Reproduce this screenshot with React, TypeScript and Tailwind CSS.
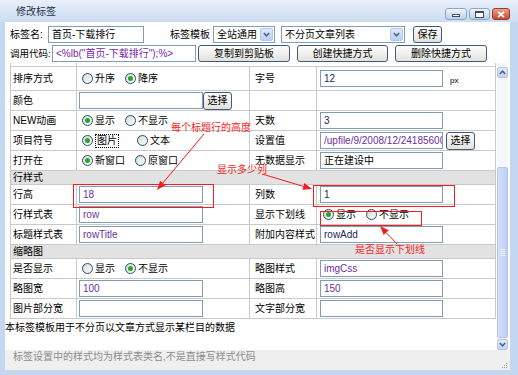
import React from "react";

const line = "border-[#c9c9c9]";
const purple = "text-[#6b2fa0]";
const navy = "text-[#23235e]";

function Field({
  value = "",
  w = "w-[124px]",
  color = "text-black",
}: {
  value?: string;
  w?: string;
  color?: string;
}) {
  return (
    <div
      className={`flex h-[17px] shrink-0 items-center overflow-hidden whitespace-nowrap border border-[#7f9db9] bg-white pl-[3px] ${w} ${color}`}
    >
      {value}
    </div>
  );
}

function Btn({
  children,
  w,
  h = "h-[17px]",
}: {
  children: React.ReactNode;
  w: string;
  h?: string;
}) {
  return (
    <div
      className={`flex shrink-0 items-center justify-center whitespace-nowrap rounded-[3px] border border-[#3d5a7c] bg-linear-to-b from-white to-[#e2e1db] text-black ${w} ${h}`}
    >
      {children}
    </div>
  );
}

function Select({ value, w }: { value: string; w: string }) {
  return (
    <div
      className={`flex h-[17px] shrink-0 items-center justify-between whitespace-nowrap border border-[#7f9db9] bg-white pl-[3px] pr-[1px] ${w}`}
    >
      <span>{value}</span>
      <span className="flex h-[13px] w-[13px] items-center justify-center rounded-[2px] border border-[#b3c6ee] bg-linear-to-b from-[#dfe8fc] to-[#bccff7]">
        <svg width="7" height="5" viewBox="0 0 7 5">
          <path d="M0.8 1 L3.5 3.8 L6.2 1" stroke="#4d6185" strokeWidth="1.5" fill="none" />
        </svg>
      </span>
    </div>
  );
}

function Radio({
  checked = false,
  label,
  focus = false,
}: {
  checked?: boolean;
  label: string;
  focus?: boolean;
}) {
  return (
    <span className="flex items-center gap-[2px] whitespace-nowrap">
      <span className="flex h-[11px] w-[11px] shrink-0 items-center justify-center rounded-full border border-[#1c5180] bg-linear-to-br from-[#d8d8d0] to-white">
        {checked && <span className="h-[5px] w-[5px] rounded-full bg-[#2aa32a]" />}
      </span>
      <span className={focus ? "border border-dotted border-black px-[1px]" : ""}>{label}</span>
    </span>
  );
}

function Radios({ children, gap = "gap-[10px]" }: { children: React.ReactNode; gap?: string }) {
  return <div className={`flex items-center pl-[3px] ${gap}`}>{children}</div>;
}

function Row({
  label,
  left,
  label2,
  right,
  h = "h-[20px]",
}: {
  label: string;
  left?: React.ReactNode;
  label2?: string;
  right?: React.ReactNode;
  h?: string;
}) {
  return (
    <div className={`grid grid-cols-[66px_173px_67px_178px] border-b ${line} ${h}`}>
      <div className={`flex items-center whitespace-nowrap border-r pl-[2px] ${line}`}>{label}</div>
      <div className={`flex items-center border-r pl-[2px] ${line}`}>{left}</div>
      <div className={`flex items-center whitespace-nowrap border-r pl-[5px] ${line}`}>{label2}</div>
      <div className="flex items-center pl-[3px]">{right}</div>
    </div>
  );
}

function Section({ title }: { title: string }) {
  return (
    <div className={`flex h-[14px] items-center border-b bg-[#e2e2e2] pl-[2px] ${line}`}>
      {title}
    </div>
  );
}

function WinControls() {
  return (
    <div className="flex items-start gap-[2px] pr-[8px] pt-[8px]">
      <div className="flex h-[12px] w-[22px] items-end justify-center rounded-[3px] border border-[#8ca5c9] bg-linear-to-b from-[#f2f6fc] to-[#bccee9] pb-[2px]">
        <div className="h-[3px] w-[8px] border border-[#3d4c66] bg-white" />
      </div>
      <div className="flex h-[12px] w-[21px] items-center justify-center rounded-[3px] border border-[#8ca5c9] bg-linear-to-b from-[#f2f6fc] to-[#bccee9]">
        <div className="h-[7px] w-[9px] border border-t-2 border-[#3d4c66] bg-white" />
      </div>
      <div className="flex h-[12px] w-[18px] items-center justify-center rounded-[3px] border border-[#9a3b2b] bg-linear-to-b from-[#eba08e] to-[#c4452f]">
        <svg width="8" height="7" viewBox="0 0 8 7">
          <path d="M1 0.8 L7 6.2 M7 0.8 L1 6.2" stroke="white" strokeWidth="1.8" />
        </svg>
      </div>
    </div>
  );
}

function Scrollbar() {
  const btn =
    "flex h-[11px] items-center justify-center rounded-[2px] border border-[#b3c6ee] bg-linear-to-b from-[#e1eafc] to-[#c2d3f7]";
  return (
    <div className="flex w-[11px] flex-col bg-[#f6f7fb]">
      <div className={`mt-[4px] ${btn}`}>
        <svg width="7" height="5" viewBox="0 0 7 5">
          <path d="M0.8 4 L3.5 1.2 L6.2 4" stroke="#4d6185" strokeWidth="1.5" fill="none" />
        </svg>
      </div>
      <div className="h-[89px]" />
      <div className="flex h-[171px] items-center justify-center rounded-[2px] border border-[#b3c6ee] bg-linear-to-r from-[#d2def9] to-[#bccff5]">
        <div className="flex flex-col gap-[1px]">
          <div className="h-px w-[5px] bg-[#eef3fd]" />
          <div className="h-px w-[5px] bg-[#eef3fd]" />
          <div className="h-px w-[5px] bg-[#eef3fd]" />
          <div className="h-px w-[5px] bg-[#eef3fd]" />
        </div>
      </div>
      <div className="h-px" />
      <div className={btn}>
        <svg width="7" height="5" viewBox="0 0 7 5">
          <path d="M0.8 1 L3.5 3.8 L6.2 1" stroke="#4d6185" strokeWidth="1.5" fill="none" />
        </svg>
      </div>
    </div>
  );
}

function Arrow({ x1, y1, x2, y2 }: { x1: number; y1: number; x2: number; y2: number }) {
  const a = Math.atan2(y2 - y1, x2 - x1);
  const l = 9;
  const w = 3.5;
  const bx = x2 - l * Math.cos(a);
  const by = y2 - l * Math.sin(a);
  const points = `${x2},${y2} ${bx + w * Math.sin(a)},${by - w * Math.cos(a)} ${
    bx - w * Math.sin(a)
  },${by + w * Math.cos(a)}`;
  return (
    <g>
      <line x1={x1} y1={y1} x2={bx} y2={by} stroke="#f21d1d" strokeWidth="1" />
      <polygon points={points} fill="#f21d1d" />
    </g>
  );
}

function Annotations() {
  return (
    <>
      <svg
        className="pointer-events-none absolute left-0 top-0"
        width="518"
        height="375"
        viewBox="0 0 518 375"
      >
        <rect x="73.5" y="184.5" width="140" height="23" fill="none" stroke="#f21d1d" />
        <rect x="313.5" y="185.5" width="141" height="21" fill="none" stroke="#f21d1d" />
        <rect x="320.5" y="211.5" width="101" height="14" fill="none" stroke="#f21d1d" />
        <Arrow x1={204} y1={134} x2={157} y2={190} />
        <Arrow x1={262} y1={174} x2={312} y2={189} />
        <Arrow x1={397} y1={244} x2={380} y2={226} />
      </svg>
      <span className="pointer-events-none absolute left-[171px] top-[122px] whitespace-nowrap text-[#f21d1d]">
        每个标题行的高度
      </span>
      <span className="pointer-events-none absolute left-[217px] top-[164px] whitespace-nowrap text-[#f21d1d]">
        显示多少列
      </span>
      <span className="pointer-events-none absolute left-[355px] top-[244px] whitespace-nowrap text-[#f21d1d]">
        是否显示下划线
      </span>
    </>
  );
}

export default function App() {
  return (
    <div className="relative flex h-[375px] w-[518px] flex-col overflow-hidden bg-[#c4d7f0] font-['Liberation_Sans','Noto_Sans_CJK_SC',sans-serif] text-[10px] leading-[12px] text-black">
      <div className="flex h-[22px] shrink-0 items-start justify-between bg-linear-to-b from-[#e8f0fa] to-[#cddcf1]">
        <span className="pl-[16px] pt-[6px] text-[#1d2f4d]">修改标签</span>
        <WinControls />
      </div>

      <div className="flex min-h-0 flex-1 pl-[5px] pr-[8px]">
        <div className="flex w-full flex-col bg-white">
          <div className="flex flex-col gap-[2px] pb-[1px] pl-[5px] pt-[4px]">
            <div className="flex h-[17px] items-center whitespace-nowrap">
              <span className="w-[38px] shrink-0">标签名:</span>
              <Field value="首页-下载排行" w="w-[96px]" />
              <span className="ml-[26px] w-[43px] shrink-0">标签模板</span>
              <Select value="全站通用" w="w-[62px]" />
              <div className="ml-[6px]">
                <Select value="不分页文章列表" w="w-[124px]" />
              </div>
              <div className="ml-[8px]">
                <Btn w="w-[29px]">保存</Btn>
              </div>
            </div>
            <div className="flex h-[17px] items-center whitespace-nowrap">
              <span className="w-[42px] shrink-0 text-[9.5px]">调用代码:</span>
              <Field value={'<%lb("首页-下载排行");%>'} w="w-[144px]" color="text-[#7a1fa2]" />
              <div className="ml-[2px]">
                <Btn w="w-[92px]">复制到剪贴板</Btn>
              </div>
              <div className="ml-[7px]">
                <Btn w="w-[91px]">创建快捷方式</Btn>
              </div>
              <div className="ml-[7px]">
                <Btn w="w-[92px]">删除快捷方式</Btn>
              </div>
            </div>
          </div>

          <div className="flex h-[287px] shrink-0 pr-[2px]">
            <div className="w-[492px] overflow-hidden">
              <div className={`ml-[5px] w-[486px] border-x ${line}`}>
                <div className={`-mt-[16px] grid h-[20px] grid-cols-[66px_418px] border-b ${line}`}>
                  <div className={`flex items-center whitespace-nowrap border-r pl-[2px] ${line}`}>排序字段</div>
                  <div className="flex items-center gap-[14px] pl-[5px]">
                    <Radio label="最新值" />
                    <Radio label="点击数" />
                    <Radio label="回复数" />
                    <Radio label="标题" />
                    <Radio label="发布顺序" />
                    <Radio label="编辑日期" />
                    <Radio label="发布人" />
                  </div>
                </div>
                <Row
                  h="h-[24px]"
                  label="排序方式"
                  left={
                    <Radios>
                      <Radio label="升序" />
                      <Radio label="降序" checked />
                    </Radios>
                  }
                  label2="字号"
                  right={
                    <>
                      <Field value="12" w="w-[123px]" color={navy} />
                      <span className="ml-[7px] mt-[5px] text-[8px]">px</span>
                    </>
                  }
                />
                <Row
                  label="颜色"
                  left={
                    <>
                      <Field />
                      <Btn w="w-[29px]" h="h-[18px]">
                        选择
                      </Btn>
                    </>
                  }
                />
                <Row
                  label="NEW动画"
                  left={
                    <Radios>
                      <Radio label="显示" checked />
                      <Radio label="不显示" />
                    </Radios>
                  }
                  label2="天数"
                  right={<Field value="3" w="w-[123px]" color={navy} />}
                />
                <Row
                  label="项目符号"
                  left={
                    <Radios gap="gap-[18px]">
                      <Radio label="图片" checked focus />
                      <Radio label="文本" />
                    </Radios>
                  }
                  label2="设置值"
                  right={
                    <>
                      <Field value="/upfile/9/2008/12/241856000" w="w-[123px]" color={purple} />
                      <div className="ml-[3px]">
                        <Btn w="w-[29px]" h="h-[18px]">
                          选择
                        </Btn>
                      </div>
                    </>
                  }
                />
                <Row
                  label="打开在"
                  left={
                    <Radios>
                      <Radio label="新窗口" checked />
                      <Radio label="原窗口" />
                    </Radios>
                  }
                  label2="无数据显示"
                  right={<Field value="正在建设中" w="w-[123px]" />}
                />
                <Section title="行样式" />
                <Row
                  label="行高"
                  left={<Field value="18" color={purple} />}
                  label2="列数"
                  right={<Field value="1" w="w-[123px]" color={navy} />}
                />
                <Row
                  label="行样式表"
                  left={<Field value="row" color={purple} />}
                  label2="显示下划线"
                  right={
                    <Radios>
                      <Radio label="显示" checked />
                      <Radio label="不显示" />
                    </Radios>
                  }
                />
                <Row
                  label="标题样式表"
                  left={<Field value="rowTitle" color={purple} />}
                  label2="附加内容样式"
                  right={<Field value="rowAdd" w="w-[123px]" color={navy} />}
                />
                <Section title="缩略图" />
                <Row
                  label="是否显示"
                  left={
                    <Radios>
                      <Radio label="显示" />
                      <Radio label="不显示" checked />
                    </Radios>
                  }
                  label2="略图样式"
                  right={<Field value="imgCss" w="w-[123px]" color={purple} />}
                />
                <Row
                  label="略图宽"
                  left={<Field value="100" color={purple} />}
                  label2="略图高"
                  right={<Field value="150" w="w-[123px]" color={purple} />}
                />
                <Row
                  label="图片部分宽"
                  left={<Field />}
                  label2="文字部分宽"
                  right={<Field w="w-[123px]" />}
                />
              </div>
              <p className="mt-[3px] whitespace-nowrap">本标签模板用于不分页以文章方式显示某栏目的数据</p>
            </div>
            <Scrollbar />
          </div>

          <div className="flex h-[20px] shrink-0 items-start justify-between bg-[#efefef] pl-[8px] pt-[1px] text-[#8c8c8c]">
            <span className="whitespace-nowrap">标签设置中的样式均为样式表类名,不是直接写样式代码</span>
            <svg className="mr-[2px] mt-[12px]" width="6" height="6" viewBox="0 0 6 6">
              <rect x="4" y="0" width="1" height="1" fill="#a0a0a0" />
              <rect x="2" y="2" width="1" height="1" fill="#a0a0a0" />
              <rect x="4" y="2" width="1" height="1" fill="#a0a0a0" />
              <rect x="0" y="4" width="1" height="1" fill="#a0a0a0" />
              <rect x="2" y="4" width="1" height="1" fill="#a0a0a0" />
              <rect x="4" y="4" width="1" height="1" fill="#a0a0a0" />
            </svg>
          </div>
        </div>
      </div>
      <div className="h-[5px] shrink-0" />
      <Annotations />
    </div>
  );
}
